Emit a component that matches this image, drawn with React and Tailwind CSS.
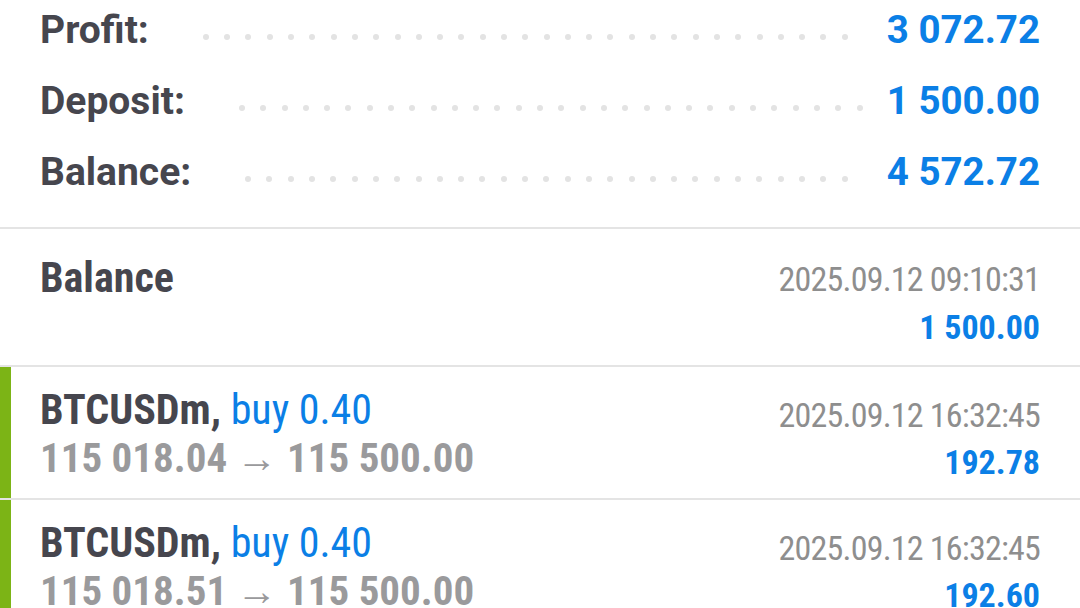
import React from "react";

const Dots = ({ n }) => (
  <div className="flex gap-[15.3px] ml-[54px] mt-[14px] shrink-0">
    {Array.from({ length: n }).map((_, i) => (
      <span key={i} className="block w-[6px] h-[6px] rounded-full bg-[#e3e3e3] shrink-0" />
    ))}
  </div>
);

const SumRow = ({ label, value, n }) => (
  <div className="flex items-center h-[71px] pl-[40px] pr-[40px]">
    <span className="text-[39px] leading-[40px] font-bold text-[#46464e]">{label}</span>
    <Dots n={n} />
    <div className="flex-1" />
    <span className="text-[38.5px] leading-[40px] font-bold text-[#0b7fe6]">{value}</span>
  </div>
);

const Deal = ({ price, time, profit }) => (
  <div className="flex h-[133px]">
    <div className="w-[11px] bg-[#7cb416] shrink-0" />
    <div className="flex-1 flex justify-between pl-[29px] pr-[40px] font-['Roboto_Condensed',Roboto,sans-serif]">
      <div className="pt-[19px]">
        <div className="text-[42px] leading-[48px] whitespace-nowrap">
          <span className="font-bold text-[#46464e]">BTCUSDm, </span>
          <span className="text-[#0b7fe6]">buy 0.40</span>
        </div>
        <div className="text-[41px] leading-[48px] font-bold text-[#9a9a9c] whitespace-nowrap">
          {price}
        </div>
      </div>
      <div className="pt-[24px] text-right">
        <div className="text-[34px] leading-[48px] tracking-[-0.8px] text-[#8e8e8e] whitespace-nowrap">{time}</div>
        <div className="text-[34px] leading-[46px] font-bold text-[#0b7fe6]">{profit}</div>
      </div>
    </div>
  </div>
);

export default function App() {
  return (
    <div className="w-[1080px] h-[608px] overflow-hidden bg-white font-['Roboto',sans-serif]">
      <div className="-mt-[6px] pb-[20px]">
        <SumRow label="Profit:" value="3 072.72" n={31} />
        <SumRow label="Deposit:" value="1 500.00" n={30} />
        <SumRow label="Balance:" value="4 572.72" n={29} />
      </div>
      <div className="border-t-2 border-[#e4e4e4] divide-y-2 divide-[#e4e4e4]">
        <div className="flex justify-between h-[138px] pl-[40px] pr-[40px] font-['Roboto_Condensed',Roboto,sans-serif]">
          <div className="pt-[28px] text-[42px] leading-[42px] font-bold text-[#46464e]">Balance</div>
          <div className="pt-[26px] text-right">
            <div className="text-[34px] leading-[48px] tracking-[-0.8px] text-[#8e8e8e]">2025.09.12 09:10:31</div>
            <div className="text-[34px] leading-[48px] font-bold text-[#0b7fe6]">1 500.00</div>
          </div>
        </div>
        <Deal price="115 018.04 → 115 500.00" time="2025.09.12 16:32:45" profit="192.78" />
        <Deal price="115 018.51 → 115 500.00" time="2025.09.12 16:32:45" profit="192.60" />
      </div>
    </div>
  );
}
